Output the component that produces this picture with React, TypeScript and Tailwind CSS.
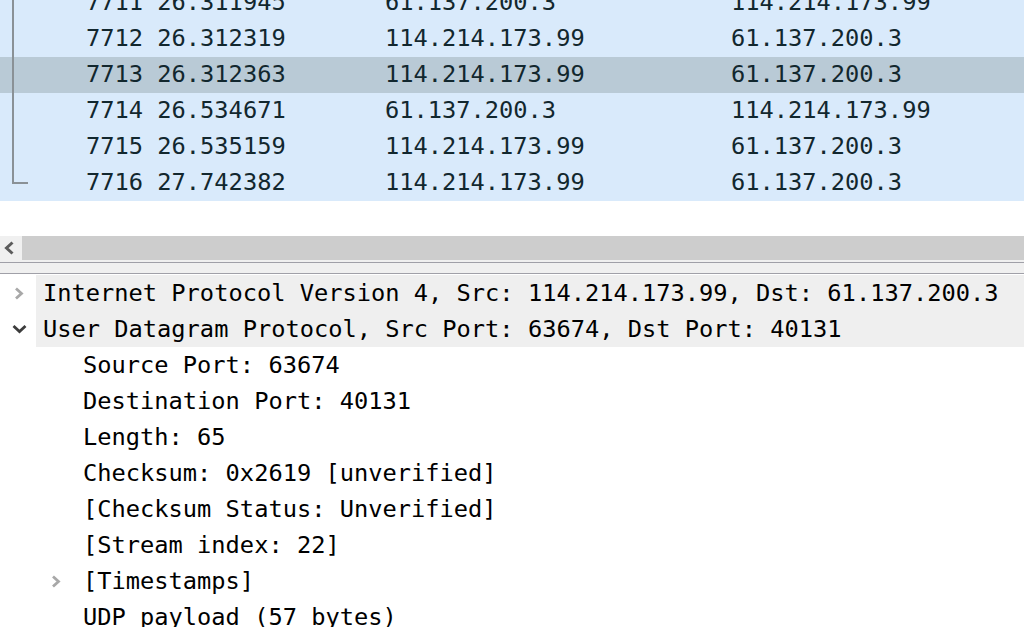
import React from 'react';

type Packet = { no: number; time: string; src: string; dst: string };

const packets: Packet[] = [
  { no: 7711, time: '26.311945', src: '61.137.200.3', dst: '114.214.173.99' },
  { no: 7712, time: '26.312319', src: '114.214.173.99', dst: '61.137.200.3' },
  { no: 7713, time: '26.312363', src: '114.214.173.99', dst: '61.137.200.3' },
  { no: 7714, time: '26.534671', src: '61.137.200.3', dst: '114.214.173.99' },
  { no: 7715, time: '26.535159', src: '114.214.173.99', dst: '61.137.200.3' },
  { no: 7716, time: '27.742382', src: '114.214.173.99', dst: '61.137.200.3' },
];

const selectedNo = 7713;

const udpFields = [
  'Source Port: 63674',
  'Destination Port: 40131',
  'Length: 65',
  'Checksum: 0x2619 [unverified]',
  '[Checksum Status: Unverified]',
  '[Stream index: 22]',
];

function ChevronRight({ className }: { className?: string }) {
  return (
    <svg width="10" height="13" viewBox="0 0 10 13" className={className}>
      <path d="M2 1.5 L7.5 6.5 L2 11.5" fill="none" stroke="currentColor" strokeWidth="2.8" />
    </svg>
  );
}

function ChevronDown({ className }: { className?: string }) {
  return (
    <svg width="15" height="10" viewBox="0 0 15 10" className={className}>
      <path d="M1.5 2 L7.5 7.5 L13.5 2" fill="none" stroke="currentColor" strokeWidth="2.8" />
    </svg>
  );
}

function PacketRow({ p, last }: { p: Packet; last: boolean }) {
  const selected = p.no === selectedNo;
  return (
    <div className={`relative flex h-[36px] items-center pb-[3px] ${selected ? 'bg-[#b9cad6]' : 'bg-[#d9eafb]'}`}>
      {/* conversation bracket */}
      <div className={`absolute left-[12px] top-0 w-[2px] bg-[#8a9196] ${last ? 'h-[19px]' : 'h-full'}`} />
      {last && <div className="absolute left-[12px] top-[17px] h-[2px] w-[16px] bg-[#8a9196]" />}
      <span className="w-[86px] shrink-0" />
      <span className="w-[299px] shrink-0">{p.no} {p.time}</span>
      <span className="w-[346px] shrink-0">{p.src}</span>
      <span>{p.dst}</span>
    </div>
  );
}

export default function App() {
  return (
    <div className="h-[627px] w-[1024px] overflow-hidden bg-white font-['DejaVu_Sans_Mono',monospace] text-[23.7px] leading-[36px]">
      {/* packet list */}
      <div className="-mt-[15px] text-[#12272e]">
        {packets.map((p, i) => (
          <PacketRow key={p.no} p={p} last={i === packets.length - 1} />
        ))}
      </div>

      {/* empty area + horizontal scrollbar */}
      <div className="h-[35px] bg-white" />
      <div className="flex h-[24px]">
        <div className="flex w-[22px] items-center justify-center pr-[3px] bg-[#f0f0f0] text-[#5c5c5c]">
          <svg width="11" height="14" viewBox="0 0 11 14">
            <path d="M8.5 1.5 L2.5 7 L8.5 12.5" fill="none" stroke="currentColor" strokeWidth="3" />
          </svg>
        </div>
        <div className="flex-1 bg-[#cdcdcd]" />
      </div>

      {/* splitter */}
      <div className="h-[2px] bg-[#f0f0f0]" />
      <div className="h-[1px] bg-[#a0a0a8]" />
      <div className="h-[10px] bg-[#f0f0f0]" />
      <div className="h-[1px] bg-[#a0a0a8]" />
      <div className="h-[1px] bg-white" />

      {/* packet details */}
      <div className="text-black">
        <div className="flex h-[36px] items-center">
          <div className="flex w-[36px] shrink-0 items-center justify-center pl-[2px] text-[#a8a8a8]">
            <ChevronRight />
          </div>
          <div className="flex h-full flex-1 items-center bg-[#efefef] pl-[7px]">
            Internet Protocol Version 4, Src: 114.214.173.99, Dst: 61.137.200.3
          </div>
        </div>
        <div className="flex h-[36px] items-center">
          <div className="flex w-[36px] shrink-0 items-center justify-center pl-[2px] text-[#3c3c3c]">
            <ChevronDown />
          </div>
          <div className="flex h-full flex-1 items-center bg-[#efefef] pl-[7px]">
            User Datagram Protocol, Src Port: 63674, Dst Port: 40131
          </div>
        </div>
        {udpFields.map((f) => (
          <div key={f} className="flex h-[36px] items-center pl-[83px]">
            {f}
          </div>
        ))}
        <div className="flex h-[36px] items-center">
          <div className="flex w-[83px] shrink-0 items-center pl-[51px] text-[#a8a8a8]">
            <ChevronRight />
          </div>
          [Timestamps]
        </div>
        <div className="flex h-[36px] items-center pl-[83px]">UDP payload (57 bytes)</div>
      </div>
    </div>
  );
}
